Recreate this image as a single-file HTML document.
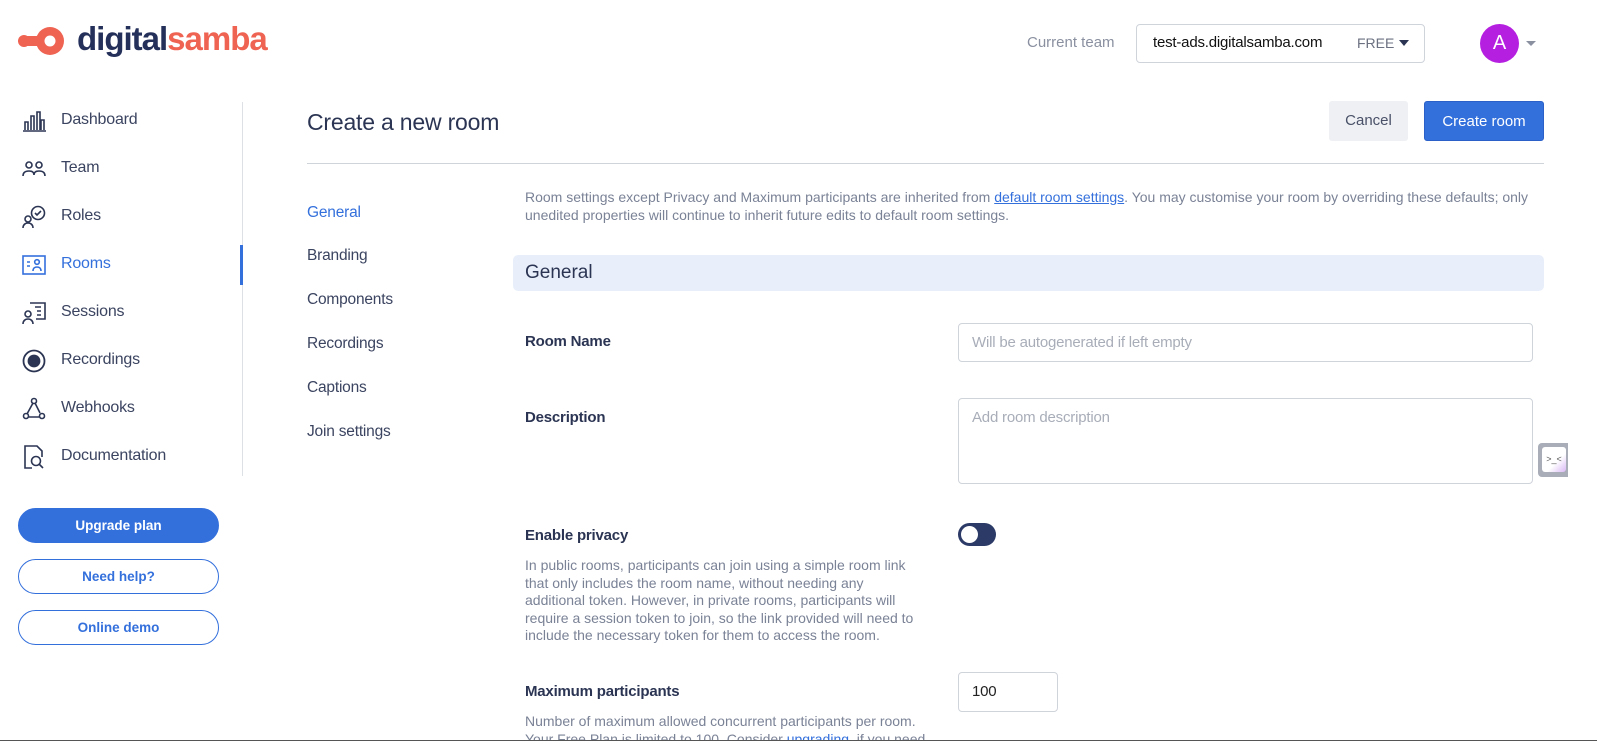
<!DOCTYPE html>
<html><head><meta charset="utf-8"><style>
*{box-sizing:border-box;margin:0;padding:0}
body{width:1597px;height:756px;overflow:hidden;background:#fff;font-family:"Liberation Sans",sans-serif;color:#2b3553;position:relative}
.a{position:absolute;white-space:nowrap}
.nav{position:absolute;left:61px;font-size:16px;color:#3b4460;letter-spacing:-0.2px}
.ic{position:absolute;left:22px;width:24px;height:24px}
.sub{position:absolute;left:307px;font-size:15.5px;color:#3b4460;letter-spacing:-0.2px}
.lbl{position:absolute;left:525px;font-size:15px;font-weight:bold;color:#2b3553;letter-spacing:-0.2px}
.gray{color:#7a8296;font-size:14px;letter-spacing:0;line-height:17.5px}
.inp{position:absolute;border:1px solid #cfd3da;border-radius:4px;background:#fff;font-size:15px;color:#a8adb8;padding-left:13px;letter-spacing:-0.2px}
.btn{position:absolute;left:18px;width:201px;height:35px;border-radius:18px;font-size:13.5px;font-weight:bold;text-align:center;line-height:33px;color:#3470dc;border:1px solid #3470dc}
</style></head><body>
<svg class="a" style="left:17px;top:25px" width="50" height="32" viewBox="0 0 50 32"><circle cx="7" cy="16" r="6" fill="#ef6352"/><rect x="7" y="11" width="20" height="10" fill="#ef6352"/><circle cx="33" cy="16" r="14" fill="#ef6352"/><circle cx="33" cy="16" r="5.5" fill="#fff"/></svg>
<div class="a" style="left:77px;top:20px;font-size:33px;font-weight:bold;letter-spacing:-1px;color:#25305a">digital<span style="color:#ef6352">samba</span></div>

<div class="a" style="left:1027px;top:34px;font-size:15px;color:#8a90a0">Current team</div>
<div class="a" style="left:1136px;top:24px;width:289px;height:39px;border:1px solid #cfd3da;border-radius:4px"></div>
<div class="a" style="left:1153px;top:34px;font-size:15px;color:#111;letter-spacing:-0.2px">test-ads.digitalsamba.com</div>
<div class="a" style="left:1357px;top:35px;font-size:14px;color:#6b7180">FREE</div>
<div class="a" style="left:1399px;top:40px;border-left:5px solid transparent;border-right:5px solid transparent;border-top:6px solid #2b3553"></div>
<div class="a" style="left:1480px;top:24px;width:39px;height:39px;border-radius:50%;background:#b51fe0;color:#fff;font-size:20px;text-align:center;line-height:39px">A</div>
<div class="a" style="left:1526px;top:41px;border-left:5px solid transparent;border-right:5px solid transparent;border-top:5px solid #8a90a0"></div>

<div class="a" style="left:242px;top:102px;width:1px;height:374px;background:#dde0e5"></div>
<div class="a" style="left:240px;top:245px;width:3px;height:40px;background:#3470dc"></div>

<svg class="ic" style="top:109px" viewBox="0 0 24 24" fill="none" stroke="#2b3553" stroke-width="1.6"><path d="M1 22h23M3 21v-8h3v8M9 21V7h3v14M15 21V3h3v18M19 21v-10h3v10"/></svg>
<div class="nav" style="top:111px">Dashboard</div>
<svg class="ic" style="top:157px" viewBox="0 0 24 24" fill="none" stroke="#2b3553" stroke-width="1.6"><circle cx="7" cy="8" r="3"/><circle cx="17" cy="8" r="3"/><path d="M1 19c0-4 3-5 6-5s5 1 5 4M12 18c0-3 2-4 5-4s6 1 6 5"/></svg>
<div class="nav" style="top:159px">Team</div>
<svg class="ic" style="top:205px" viewBox="0 0 24 24" fill="none" stroke="#2b3553" stroke-width="1.6"><circle cx="6" cy="14" r="3"/><path d="M1 23c0-3 2-5 5-5s5 2 5 5"/><circle cx="16" cy="8" r="6.5"/><path d="M13 8l2 2 4-4"/></svg>
<div class="nav" style="top:207px">Roles</div>
<svg class="ic" style="top:253px" viewBox="0 0 24 24" fill="none" stroke="#3470dc" stroke-width="1.6"><rect x="1" y="3" width="22" height="18"/><path d="M5 9h3M5 13h3"/><circle cx="15" cy="9" r="2.3"/><path d="M11 18c0-3 2-4 4-4s4 1 4 4"/></svg>
<div class="nav" style="top:255px;color:#3470dc">Rooms</div>
<svg class="ic" style="top:301px" viewBox="0 0 24 24" fill="none" stroke="#2b3553" stroke-width="1.6"><path d="M8 2h15v16h-9"/><path d="M13 6h6M15 10h4M15 14h4"/><circle cx="6" cy="13" r="3"/><path d="M1 23c0-3 2-5 5-5s5 2 5 5"/></svg>
<div class="nav" style="top:303px">Sessions</div>
<svg class="ic" style="top:349px" viewBox="0 0 24 24" fill="none" stroke="#2b3553" stroke-width="1.8"><circle cx="12" cy="12" r="10.5"/><circle cx="12" cy="12" r="5.5" fill="#2b3553"/></svg>
<div class="nav" style="top:351px">Recordings</div>
<svg class="ic" style="top:397px" viewBox="0 0 24 24" fill="none" stroke="#2b3553" stroke-width="1.6"><circle cx="12" cy="4" r="2.5"/><circle cx="4" cy="19" r="2.5"/><circle cx="20" cy="19" r="2.5"/><path d="M11 6l-6 11M13 6l5 10M7 20h10"/></svg>
<div class="nav" style="top:399px">Webhooks</div>
<svg class="ic" style="top:445px" viewBox="0 0 24 24" fill="none" stroke="#2b3553" stroke-width="1.6"><path d="M10 23H3V1h12l5 5v6"/><circle cx="14" cy="16" r="4.5"/><path d="M17 19l4 4"/></svg>
<div class="nav" style="top:447px">Documentation</div>

<div class="btn" style="top:508px;background:#3470dc;color:#fff">Upgrade plan</div>
<div class="btn" style="top:559px">Need help?</div>
<div class="btn" style="top:610px">Online demo</div>

<div class="a" style="left:307px;top:109px;font-size:23px;color:#2b3553;letter-spacing:-0.2px">Create a new room</div>
<div class="a" style="left:1329px;top:101px;width:79px;height:40px;background:#eef0f3;border-radius:3px;font-size:15px;color:#4a5168;text-align:center;line-height:40px">Cancel</div>
<div class="a" style="left:1424px;top:101px;width:120px;height:40px;background:#3470dc;border-radius:3px;font-size:15px;color:#fff;text-align:center;line-height:40px;border:1px solid #2a60c8">Create room</div>
<div class="a" style="left:307px;top:163px;width:1237px;height:1px;background:#cfd3da"></div>

<div class="sub" style="top:204px;color:#3470dc">General</div>
<div class="sub" style="top:247px">Branding</div>
<div class="sub" style="top:291px">Components</div>
<div class="sub" style="top:335px">Recordings</div>
<div class="sub" style="top:379px">Captions</div>
<div class="sub" style="top:423px">Join settings</div>

<div class="a gray" style="left:525px;top:189px">Room settings except Privacy and Maximum participants are inherited from <span style="color:#3470dc;text-decoration:underline">default room settings</span>. You may customise your room by overriding these defaults; only<br>unedited properties will continue to inherit future edits to default room settings.</div>

<div class="a" style="left:513px;top:255px;width:1031px;height:36px;background:#e9effa;border-radius:5px"></div>
<div class="a" style="left:525px;top:262px;font-size:19px;color:#2b3553">General</div>

<div class="lbl" style="top:333px">Room Name</div>
<div class="inp" style="left:958px;top:323px;width:575px;height:39px;line-height:37px">Will be autogenerated if left empty</div>
<div class="lbl" style="top:409px">Description</div>
<div class="inp" style="left:958px;top:398px;width:575px;height:86px;padding-top:10px">Add room description</div>

<div class="lbl" style="top:527px">Enable privacy</div>
<div class="a" style="left:958px;top:523px;width:38px;height:23px;border-radius:12px;background:#2b3a66"></div>
<div class="a" style="left:961px;top:526px;width:17px;height:17px;border-radius:50%;background:#fff"></div>
<div class="a gray" style="left:525px;top:557px">In public rooms, participants can join using a simple room link<br>that only includes the room name, without needing any<br>additional token. However, in private rooms, participants will<br>require a session token to join, so the link provided will need to<br>include the necessary token for them to access the room.</div>

<div class="lbl" style="top:683px">Maximum participants</div>
<div class="inp" style="left:958px;top:672px;width:100px;height:40px;line-height:38px;color:#222">100</div>
<div class="a gray" style="left:525px;top:713px">Number of maximum allowed concurrent participants per room.<br>Your Free Plan is limited to 100. Consider <span style="color:#3470dc">upgrading</span>, if you need</div>

<div class="a" style="left:1538px;top:443px;width:30px;height:34px;background:#a8adb8;border-radius:4px 0 0 4px"></div>
<div class="a" style="left:1542px;top:447px;width:24px;height:25px;background:linear-gradient(135deg,#fff 60%,#d9b8f5);border-radius:3px;font-size:9px;color:#555;text-align:center;line-height:25px">&gt;_&lt;</div>

<div class="a" style="left:0;top:740px;width:1597px;height:16px;background:#fff;border-top:1px solid #555"></div>
</body></html>
